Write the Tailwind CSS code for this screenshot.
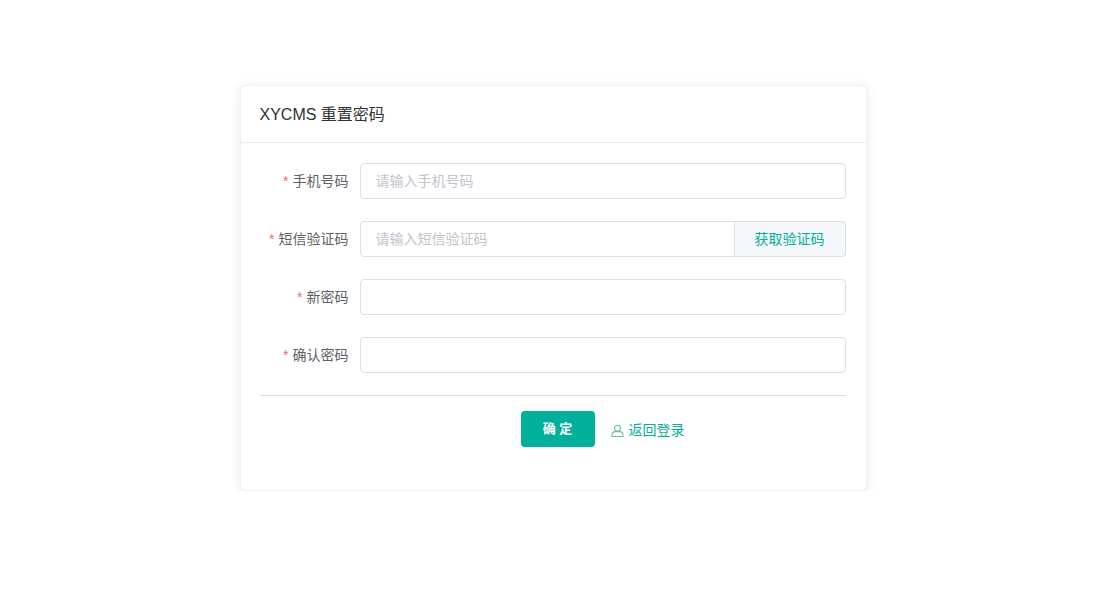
<!DOCTYPE html>
<html lang="zh-CN">
<head>
  <meta charset="utf-8"/>
  <meta content="width=device-width, initial-scale=1.0" name="viewport"/>
  <title>XYCMS 重置密码</title>
  <script src="https://cdn.jsdelivr.net/npm/@tailwindcss/browser@4"></script>
</head>
<body class="bg-white font-['Liberation_Sans','Noto_Sans_CJK_SC',sans-serif] text-[14px] text-[#606266]">
  <div class="flex justify-center pt-[85px] pl-[9px]">
    <!-- Card -->
    <div class="w-[627px] h-[406px] bg-white rounded border border-[#eeeef6] shadow-[0_2px_12px_0_rgba(60,60,110,0.11)]">
      <div class="h-[57px] px-[19px] pt-px flex items-center border-b border-[#ebeef5] text-base text-[#303133]">XYCMS 重置密码</div>
      <form class="pt-5 pl-[19px]">
        <!-- Phone -->
        <div class="flex items-center mb-[22px]">
          <label class="w-[100px] pr-[11px] text-right whitespace-nowrap"><span class="text-[#f56c6c] mr-1">*</span>手机号码</label>
          <input class="w-[486px] h-9 px-[15px] border border-[#dcdfe6] rounded placeholder:text-[#c0c4cc]" placeholder="请输入手机号码"/>
        </div>
        <!-- SMS code -->
        <div class="flex items-center mb-[22px]">
          <label class="w-[100px] pr-[11px] text-right whitespace-nowrap"><span class="text-[#f56c6c] mr-1">*</span>短信验证码</label>
          <div class="w-[486px] flex">
            <input class="flex-1 min-w-0 h-9 px-[15px] border border-[#dcdfe6] rounded-l placeholder:text-[#c0c4cc]" placeholder="请输入短信验证码"/>
            <button type="button" class="w-[111px] h-9 bg-[#f5f7fa] border border-l-0 border-[#dcdfe6] rounded-r text-[#00b09b]">获取验证码</button>
          </div>
        </div>
        <!-- New password -->
        <div class="flex items-center mb-[22px]">
          <label class="w-[100px] pr-[11px] text-right whitespace-nowrap"><span class="text-[#f56c6c] mr-1">*</span>新密码</label>
          <input type="password" class="w-[486px] h-9 px-[15px] border border-[#dcdfe6] rounded"/>
        </div>
        <!-- Confirm -->
        <div class="flex items-center mb-[22px]">
          <label class="w-[100px] pr-[11px] text-right whitespace-nowrap"><span class="text-[#f56c6c] mr-1">*</span>确认密码</label>
          <input type="password" class="w-[486px] h-9 px-[15px] border border-[#dcdfe6] rounded"/>
        </div>
        <div class="border-t border-[#dcdfe6] w-[586px]"></div>
        <div class="flex items-center mt-[15px] pl-[261px]">
          <button type="button" class="w-[74px] h-9 bg-[#00b09b] text-white rounded text-[13px] font-bold">确 定</button>
          <a class="ml-4 pt-[2px] flex items-center text-[#00b09b]" href="#">
            <svg class="w-[13px] h-[13px] mr-[5px]" viewBox="0 0 14 14" fill="none" stroke="#6fb5ab" stroke-width="1.1">
              <circle cx="7" cy="4.500" r="3.200"/>
              <path d="M1 13.500v-1.500c0-2.200 1.500-3.800 3.800-3.800h4.400c2.300 0 3.800 1.600 3.800 3.800v1.500z"/>
            </svg>
            返回登录
          </a>
        </div>
      </form>
    </div>
  </div>
</body>
</html>
